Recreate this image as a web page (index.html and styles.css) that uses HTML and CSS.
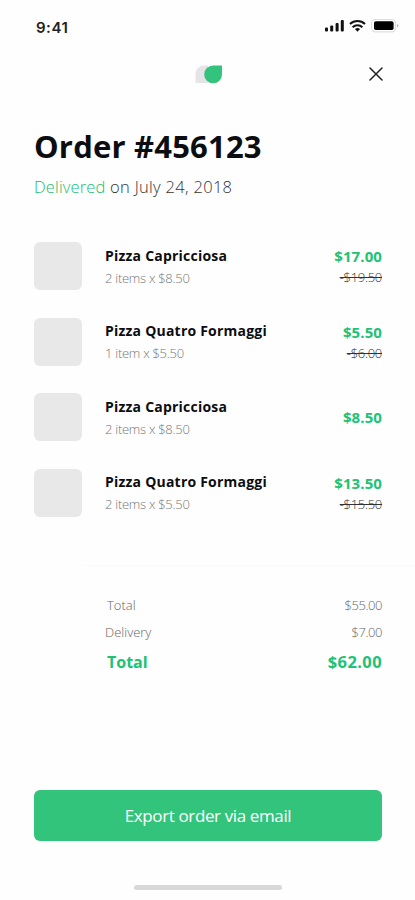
FILE: index.html
```html
<!DOCTYPE html>
<html lang="en">
<head>
<meta charset="utf-8">
<title>Order #456123</title>
<link rel="stylesheet" href="styles.css">
</head>
<body>
<div class="screen">
  <header class="status">
    <span class="time">9:41</span>
    <svg class="indicators" width="76" height="18" viewBox="0 0 76 18">
      <g fill="#111">
        <rect x="1" y="10.5" width="3" height="4" rx="1"/>
        <rect x="6.2" y="8.5" width="3" height="6" rx="1"/>
        <rect x="11.6" y="6" width="3" height="8.5" rx="1"/>
        <rect x="16.8" y="3" width="3" height="11.5" rx="1"/>
        <path d="M33.5 14.8l-2.6-2.7a3.8 3.8 0 0 1 5.2 0z"/>
      </g>
      <g fill="none" stroke="#111" stroke-width="2">
        <path d="M26 7.1a10.9 10.9 0 0 1 15 0"/>
        <path d="M28.6 10.2a7.1 7.1 0 0 1 9.8 0"/>
      </g>
      <rect x="47.6" y="2.5" width="23.8" height="12.4" rx="3.6" fill="#fff" stroke="#dedede" stroke-width="1.2"/>
      <rect x="50" y="4.3" width="19.6" height="8.8" rx="1.8" fill="#000"/>
      <path d="M73 7v3.600q1.500-.5 1.500-1.800T73 7z" fill="#bbb"/>
    </svg>
  </header>
  <nav class="topbar">
    <svg class="logo" width="28" height="19" viewBox="0 0 28 19">
      <path d="M.5 18V9A8.500 8.500 0 0 1 9 .5h4V18z" fill="#e6e4e7"/>
      <path d="M27 .5V9.300A8.900 8.900 0 1 1 18.100.5z" fill="#33c37c"/>
    </svg>
    <svg class="close" width="14" height="14" viewBox="0 0 14 14">
      <path d="M1 1l12 12M13 1L1 13" fill="none" stroke="#222" stroke-width="1.5" stroke-linecap="round"/>
    </svg>
  </nav>
  <main class="content">
    <h1 class="title">Order #456123</h1>
    <p class="state"><span class="delivered">Delivered</span> on July 24, 2018</p>
    <ul class="items">
      <li class="item">
        <span class="thumb"></span>
        <div class="info"><span class="name">Pizza Capricciosa</span><span class="qty">2 items x $8.50</span></div>
        <div class="cost"><span class="price">$17.00</span><s class="old">-$19.50</s></div>
      </li>
      <li class="item">
        <span class="thumb"></span>
        <div class="info"><span class="name">Pizza Quatro Formaggi</span><span class="qty">1 item x $5.50</span></div>
        <div class="cost"><span class="price">$5.50</span><s class="old">-$6.00</s></div>
      </li>
      <li class="item">
        <span class="thumb"></span>
        <div class="info"><span class="name">Pizza Capricciosa</span><span class="qty">2 items x $8.50</span></div>
        <div class="cost"><span class="price">$8.50</span></div>
      </li>
      <li class="item">
        <span class="thumb"></span>
        <div class="info"><span class="name">Pizza Quatro Formaggi</span><span class="qty">2 items x $5.50</span></div>
        <div class="cost"><span class="price">$13.50</span><s class="old">-$15.50</s></div>
      </li>
    </ul>
    <div class="divider"></div>
    <dl class="totals">
      <div class="line indent"><dt>Total</dt><dd>$55.00</dd></div>
      <div class="line"><dt>Delivery</dt><dd>$7.00</dd></div>
      <div class="line indent sum"><dt>Total</dt><dd>$62.00</dd></div>
    </dl>
    <button class="export">Export order via email</button>
  </main>
  <div class="home"></div>
</div>
</body>
</html>
```
FILE: styles.css
```css
* { box-sizing: border-box; margin: 0; padding: 0; }
body { background: #fefefe; font-family: "Open Sans", "Noto Sans", sans-serif; color: #0c0d10; }
.screen { width: 415px; height: 900px; overflow: hidden; display: flex; flex-direction: column; }
.status { height: 50px; padding: 17px 15px 0 36px; display: flex; justify-content: space-between; align-items: flex-start; }
.time { font: 600 15px/22px Inter, sans-serif; letter-spacing: .5px; color: #222; }
.topbar { height: 76px; padding: 15px 32px 0 195px; display: flex; justify-content: space-between; align-items: flex-start; }
.close { margin-top: 2px; }
.content { height: 759px; padding: 0 33px 0 34px; display: flex; flex-direction: column; }
.title { font-size: 31px; line-height: 40px; font-weight: 700; letter-spacing: .2px; white-space: nowrap; }
.state { margin-top: 9px; font-size: 16.5px; line-height: 24px; font-weight: 300; letter-spacing: .3px; color: #333; white-space: nowrap; }
.delivered { color: #21bd70; letter-spacing: .15px; }
.items { margin-top: 43.4px; list-style: none; display: grid; gap: 27.4px; }
.item { height: 48px; display: flex; align-items: center; }
.thumb { width: 48px; height: 48px; border-radius: 6px; background: #e8e8e8; }
.info { margin-left: 23px; flex: 1; display: flex; flex-direction: column; gap: 3px; }
.name { font-size: 14px; line-height: 20px; font-weight: 700; letter-spacing: .22px; }
.qty { font-size: 13px; line-height: 18px; font-weight: 300; letter-spacing: -.28px; color: #777; }
.cost { display: flex; flex-direction: column; align-items: flex-end; gap: 2px; }
.price { font-size: 15px; line-height: 20px; font-weight: 700; letter-spacing: .1px; color: #21c274; }
.old { font-size: 13px; line-height: 18px; font-weight: 300; letter-spacing: -.3px; color: #333; }
.divider { margin: 48px -33px 0 48px; height: 1px; flex: none; background: #fafafa; }
.totals { margin: 30px 0 0 71px; }
.line { height: 27px; display: flex; justify-content: space-between; font-size: 13px; line-height: 18px; font-weight: 300; color: #666; }
.line dd { letter-spacing: -.45px; }
.indent { padding-left: 2px; }
.sum { font-size: 16px; line-height: 24px; font-weight: 700; color: #21c274; }
.sum dd { font-size: 16.5px; letter-spacing: .4px; }
.export { margin-top: auto; height: 51px; flex: none; border: 0; border-radius: 6px; background: #33c47c; color: #fff; font: 400 17px/24px "Open Sans", sans-serif; letter-spacing: -.38px; margin-bottom: 44px; }
.home { width: 148px; height: 5px; border-radius: 3px; background: #d8d8d8; margin-left: 134px; }
```
